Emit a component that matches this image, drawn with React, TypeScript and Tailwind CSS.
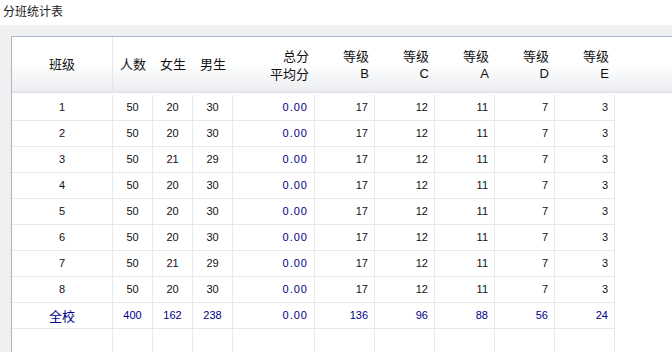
import React from "react";

const rows = [
  ["1", "50", "20", "30", "0.00", "17", "12", "11", "7", "3"],
  ["2", "50", "20", "30", "0.00", "17", "12", "11", "7", "3"],
  ["3", "50", "21", "29", "0.00", "17", "12", "11", "7", "3"],
  ["4", "50", "20", "30", "0.00", "17", "12", "11", "7", "3"],
  ["5", "50", "20", "30", "0.00", "17", "12", "11", "7", "3"],
  ["6", "50", "20", "30", "0.00", "17", "12", "11", "7", "3"],
  ["7", "50", "21", "29", "0.00", "17", "12", "11", "7", "3"],
  ["8", "50", "20", "30", "0.00", "17", "12", "11", "7", "3"],
];

const total = ["全校", "400", "162", "238", "0.00", "136", "96", "88", "56", "24"];

const grid =
  "grid grid-cols-[101px_40px_40px_40px_82px_60px_60px_60px_60px_60px_1fr]";

const cjk = "font-['Noto_Sans_CJK_SC',sans-serif]";
const num = "font-['Liberation_Sans','Noto_Sans_CJK_SC',sans-serif]";

function Cell({
  value,
  col,
  blue,
}: {
  value: string;
  col: number;
  blue?: boolean;
}) {
  // 前四列居中，其余右对齐
  const align = col < 4 ? "justify-center" : "justify-end pr-[6px]";
  const color = blue || col === 4 ? "text-[#000088]" : "text-[#111]";
  const font = col === 0 && value === "全校" ? `${cjk} text-[13px]` : `${num} text-[11px]`;
  return (
    <div
      className={`flex h-[26px] items-center border-b border-r border-[#e9e9e9] ${align} ${color} ${font} ${
        col === 4 ? "tracking-[1px]" : ""
      }`}
    >
      {value}
    </div>
  );
}

export default function App() {
  return (
    <div className="h-[352px] w-[672px] overflow-hidden bg-white">
      <div className={`h-[25px] pl-[3px] pt-[3px] text-[12px] leading-[16px] text-[#222] ${cjk}`}>
        分班统计表
      </div>
      <div className="h-[327px] bg-[#f0f0f0] pl-[11px] pt-[11px]">
        <div className="h-full border-l border-t border-[#a9b8c8] bg-white">
          {/* 表头 */}
          <div
            className={`${grid} h-[53px] bg-gradient-to-b from-white via-white to-[#eceef1] text-[13px] text-[#111] ${cjk}`}
          >
            <div className="flex items-center justify-center border-r border-[#e4e6e9] pt-[1px]">班级</div>
            <div className="flex items-center justify-center pt-[1px]">人数</div>
            <div className="flex items-center justify-center pt-[1px]">女生</div>
            <div className="flex items-center justify-center pt-[1px]">男生</div>
            <div className="flex flex-col items-end justify-center pr-[6px] pt-[2px] leading-[18px]">
              <span>总分</span>
              <span>平均分</span>
            </div>
            {["B", "C", "A", "D", "E"].map((g) => (
              <div key={g} className="flex flex-col items-end justify-center pr-[6px] pt-[2px] leading-[18px]">
                <span>等级</span>
                <span className={num}>{g}</span>
              </div>
            ))}
            <div />
          </div>
          <div className="h-[2px] bg-[#e8eaed]" />
          <div className="h-[3px] border-t border-[#dcdfe3] bg-white" />
          {/* 数据 */}
          {rows.map((r, i) => (
            <div key={i} className={grid}>
              {r.map((v, c) => (
                <Cell key={c} value={v} col={c} />
              ))}
            </div>
          ))}
          <div className={grid}>
            {total.map((v, c) => (
              <Cell key={c} value={v} col={c} blue />
            ))}
          </div>
          <div className={grid}>
            {total.map((_, c) => (
              <Cell key={c} value="" col={c} />
            ))}
          </div>
        </div>
      </div>
    </div>
  );
}
